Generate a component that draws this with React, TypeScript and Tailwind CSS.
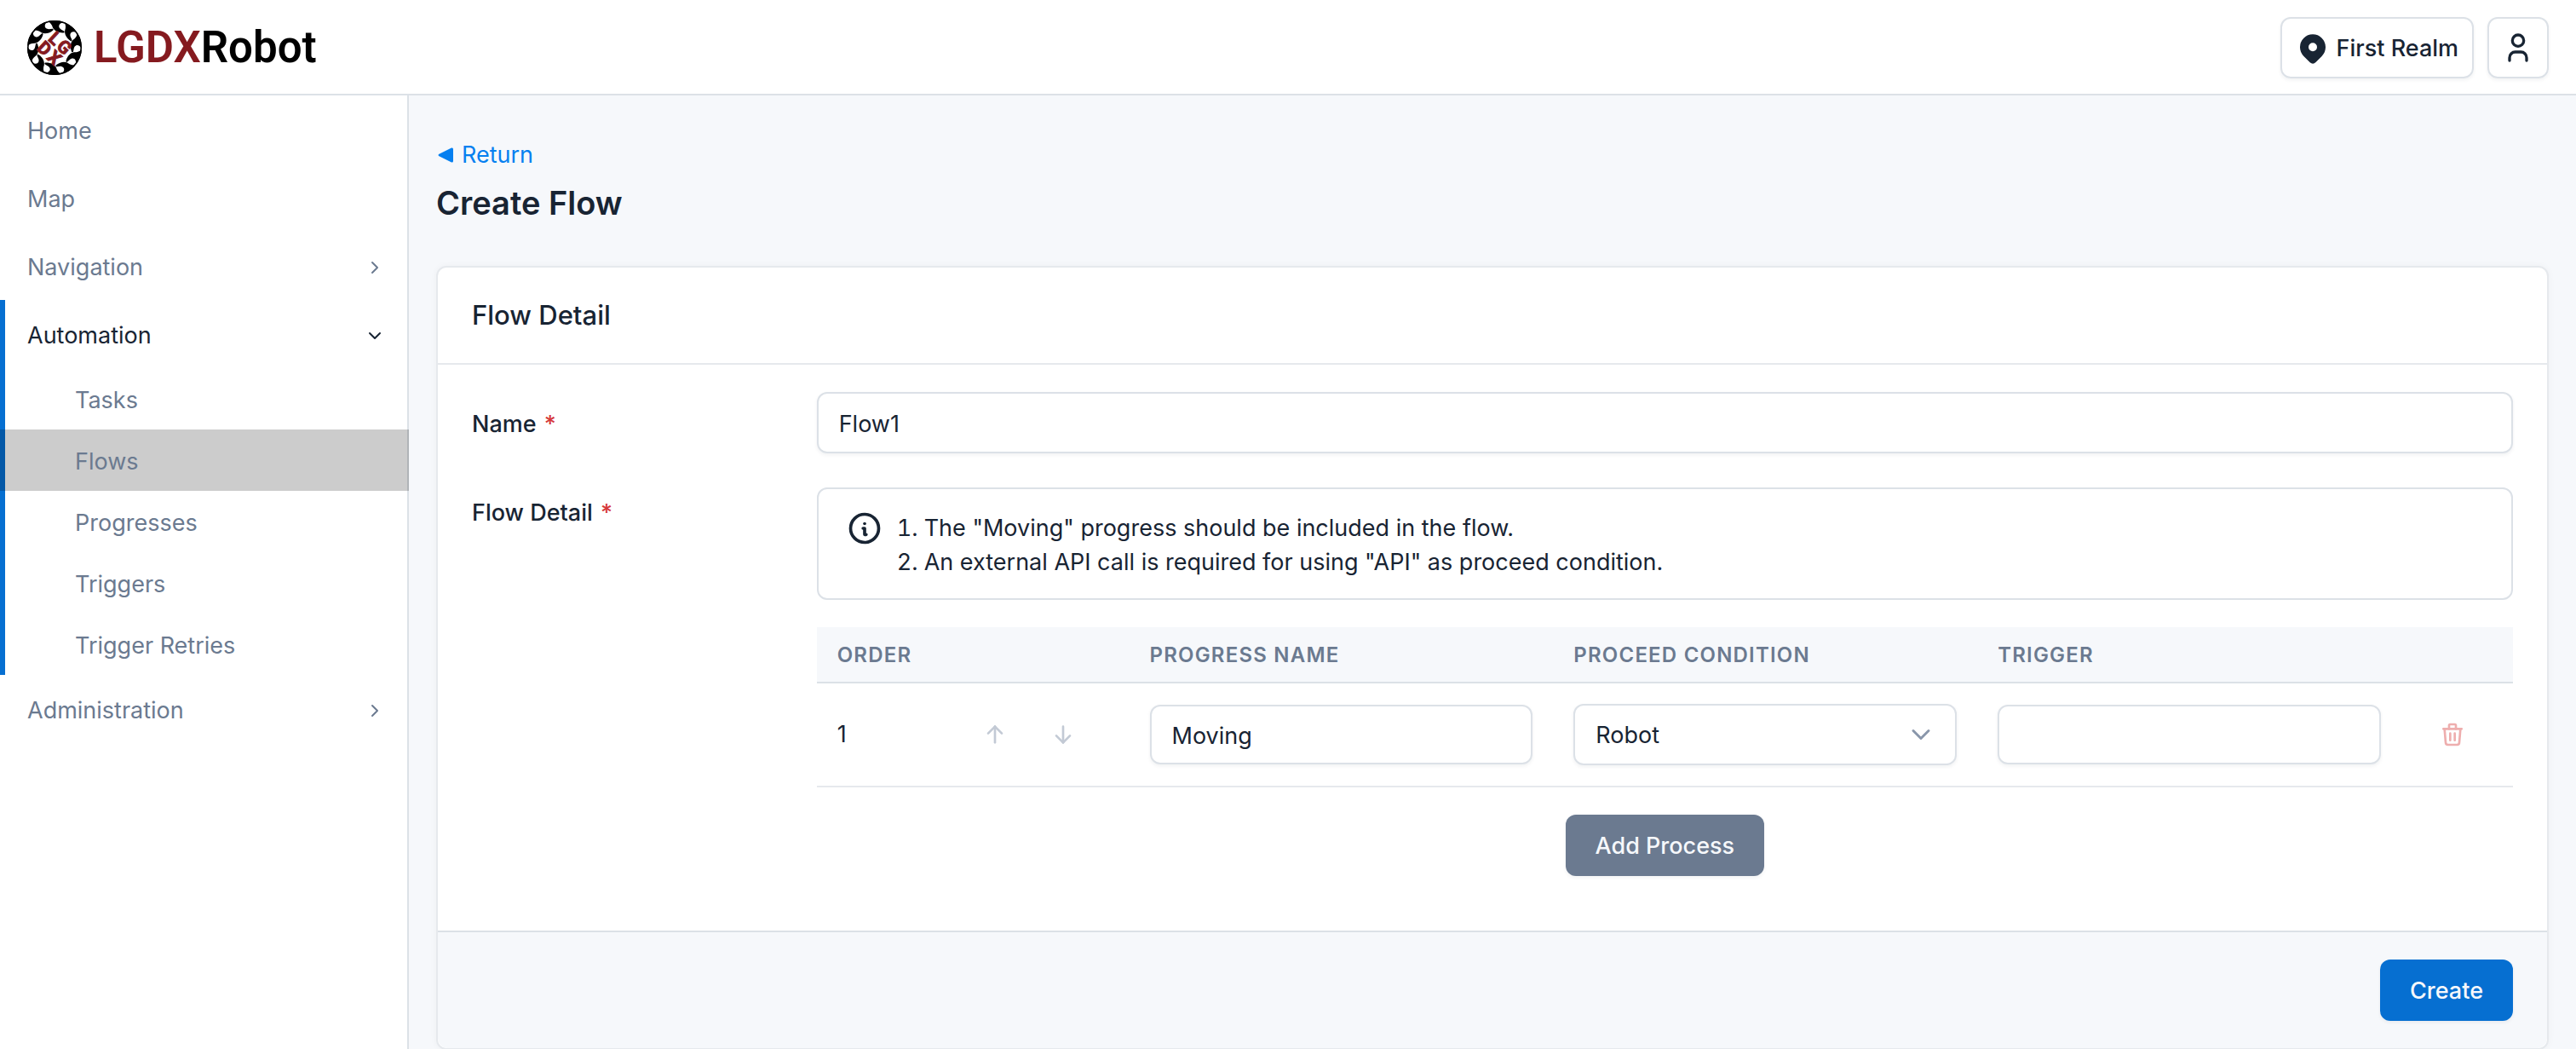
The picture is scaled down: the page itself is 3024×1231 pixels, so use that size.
import { useState } from "react";
import { TbArrowDown, TbArrowUp, TbChevronDown, TbChevronRight, TbInfoCircle, TbMapPinFilled, TbTrash, TbUser } from "react-icons/tb";

const subItems = ["Tasks", "Flows", "Progresses", "Triggers", "Trigger Retries"];
const conditions = ["Robot", "API"];

const control =
  "w-full rounded-xl border-2 border-[#dce1e7] bg-white px-6 pt-0.5 shadow-[0_2px_4px_rgba(24,36,51,0.06)] outline-none focus:border-[#066fd1]";

function Logo() {
  const blades = Array.from({ length: 10 }, (_, i) => i * 36);
  return (
    <svg viewBox="0 0 64 64" className="size-16" aria-hidden="true">
      <circle cx="32" cy="32" r="31.2" fill="#fff" stroke="#000" strokeWidth="1.6" />
      {blades.map((angle) => (
        <path
          key={angle}
          d="M24 1 A32 32 0 0 1 43 2 C38 3 36 6 38 9 C39.5 11 42 11.5 43.5 12.8 C44 14 43 14.6 42 14.4 C37 14.6 32 12.5 30 8.5 C29 5 27 2.5 24 1 Z"
          fill="#000"
          transform={`rotate(${angle} 32 32)`}
        />
      ))}
      <g
        transform="rotate(43 32 32)"
        fill="#851a1f"
        stroke="#851a1f"
        strokeWidth="1"
        fontFamily="Roboto, sans-serif"
        fontWeight="700"
        fontSize="21"
        textAnchor="middle"
      >
        <text x="25" y="31">L</text>
        <text x="40" y="31">G</text>
        <text x="24" y="48">D</text>
        <text x="40" y="48">X</text>
      </g>
    </svg>
  );
}

function Header() {
  return (
    <header className="flex items-center justify-between border-b-2 border-[#dce1e7] bg-white px-8 pt-5 pb-[18px]">
      <a href="#home" className="flex items-center gap-3.5">
        <Logo />
        <span className="font-[Roboto,sans-serif] text-[51px] font-semibold text-black">
          <span className="text-[#851a1f]">LGDX</span>Robot
        </span>
      </a>
      <div className="flex gap-4">
        <button type="button" className="flex h-18 items-center gap-2 rounded-xl border-2 border-[#dce1e7] px-4 pt-0.5 font-medium shadow-[0_2px_4px_rgba(24,36,51,0.06)]">
          <TbMapPinFilled className="size-10" />
          First Realm
        </button>
        <button type="button" aria-label="Account" className="flex size-18 items-center justify-center rounded-xl border-2 border-[#dce1e7] shadow-[0_2px_4px_rgba(24,36,51,0.06)]">
          <TbUser className="size-10" />
        </button>
      </div>
    </header>
  );
}

function Sidebar() {
  return (
    <nav className="w-120 shrink-0 border-r-2 border-[#dce1e7] bg-white text-[#6b7a90]">
      <a href="#home" className="flex h-20 items-center px-8 pt-1">Home</a>
      <a href="#map" className="flex h-20 items-center px-8 pt-1">Map</a>
      <a href="#navigation" className="flex h-20 items-center justify-between pt-1 pr-6.5 pl-8">
        Navigation <TbChevronRight className="size-6" />
      </a>
      <div className="relative">
        <span className="absolute inset-y-0 left-0 w-1.5 bg-[#066fd1]" />
        <a href="#automation" className="flex h-20 items-center justify-between pt-1 pr-6.5 pl-8 text-[#182433]">
          Automation <TbChevronDown className="size-6" />
        </a>
        {subItems.map((item) => (
          <a
            key={item}
            href={`#${item}`}
            className={item === "Flows" ? "relative -mr-0.5 flex h-18 items-center bg-black/20 pt-1 pl-22" : "flex h-18 items-center pt-1 pl-22"}
          >
            {item}
          </a>
        ))}
      </div>
      <a href="#administration" className="flex h-20 items-center justify-between pt-1 pr-6.5 pl-8">
        Administration <TbChevronRight className="size-6" />
      </a>
    </nav>
  );
}

function ProcessTable() {
  const [progress, setProgress] = useState("Moving");
  const [condition, setCondition] = useState("Robot");
  const [trigger, setTrigger] = useState("");

  return (
    <table className="w-full table-fixed border-collapse">
      <thead>
        <tr className="h-[65px] border-b-2 border-[#dce1e7] bg-[#f6f8fb] text-left text-2xl tracking-wider text-[#6b7a90] uppercase">
          <th scope="col" className="px-6 pt-0.5 font-semibold">Order</th>
          <th scope="col" className="w-1/4 px-6 pt-0.5 font-semibold">Progress Name</th>
          <th scope="col" className="w-1/4 px-6 pt-0.5 font-semibold">Proceed Condition</th>
          <th scope="col" className="w-1/4 px-6 pt-0.5 font-semibold">Trigger</th>
          <th scope="col" className="w-[131px]" aria-label="Actions" />
        </tr>
      </thead>
      <tbody>
        <tr className="h-[122px] border-b-2 border-[#e6e9ed]">
          <td className="px-6">
            <div className="flex items-center justify-between">
              1
              <div className="flex gap-12 pr-9.5 text-[#c3cad5]">
                <button type="button" disabled aria-label="Move up"><TbArrowUp className="size-8" /></button>
                <button type="button" disabled aria-label="Move down"><TbArrowDown className="size-8" /></button>
              </div>
            </div>
          </td>
          <td className="px-6">
            <input aria-label="Progress name" className={`${control} h-[70px]`} value={progress} onChange={(e) => setProgress(e.target.value)} />
          </td>
          <td className="px-6">
            <div className="grid items-center">
              <select
                aria-label="Proceed condition"
                className={`${control} col-start-1 row-start-1 h-18 appearance-none`}
                value={condition}
                onChange={(e) => setCondition(e.target.value)}
              >
                {conditions.map((name) => (
                  <option key={name}>{name}</option>
                ))}
              </select>
              <TbChevronDown className="pointer-events-none col-start-1 row-start-1 mr-6 size-9 justify-self-end text-[#8a97ab]" />
            </div>
          </td>
          <td className="px-6">
            <input aria-label="Trigger" className={`${control} h-[70px]`} value={trigger} onChange={(e) => setTrigger(e.target.value)} />
          </td>
          <td className="pl-6">
            <button type="button" disabled aria-label="Delete" className="flex size-18 items-center justify-center text-[#eeaeae]">
              <TbTrash className="size-8" />
            </button>
          </td>
        </tr>
      </tbody>
    </table>
  );
}

export default function App() {
  const [name, setName] = useState("Flow1");

  return (
    <div className="flex h-screen flex-col overflow-hidden bg-[#f6f8fb] font-[Inter,sans-serif] text-[27px] leading-10 text-[#182433]">
      <Header />
      <div className="flex min-h-0 flex-1">
        <Sidebar />
        <main className="min-w-0 flex-1 overflow-hidden px-8 pt-12">
          <a href="#flows" className="flex items-center gap-2.5 pt-0.5 text-[#0680f0]">
            <svg viewBox="0 0 18 18" className="ml-0.5 size-[18px]" fill="currentColor" aria-hidden="true">
              <path d="M1 8 L16 0.5 Q18 0 18 2 V16 Q18 18 16 17.5 L1 10 Q0 9 1 8 Z" />
            </svg>
            Return
          </a>
          <h1 className="mt-2 text-[38px] leading-14 font-semibold">Create Flow</h1>

          <form className="mt-11.5 rounded-xl border-2 border-[#e6e9ed] bg-white shadow-[0_0_8px_rgba(24,36,51,0.04)]" onSubmit={(e) => e.preventDefault()}>
            <h2 className="border-b-2 border-[#e6e9ed] px-10 py-9 text-[31px] leading-10 font-medium">Flow Detail</h2>
            <div className="p-10 pt-8 pb-16">
              <div className="-mx-4 flex">
                <label htmlFor="flow-name" className="w-1/6 px-4 pt-4.5 font-medium">
                  Name <span className="ml-0.5 text-[#d63939]">*</span>
                </label>
                <div className="w-5/6 px-4">
                  <input id="flow-name" required className={`${control} h-18`} value={name} onChange={(e) => setName(e.target.value)} />
                </div>
              </div>
              <div className="-mx-4 mt-10 flex">
                <div className="w-1/6 px-4 pt-2.5 font-medium">
                  Flow Detail <span className="ml-0.5 text-[#d63939]">*</span>
                </div>
                <div className="w-5/6 px-4">
                  <div className="flex gap-4 rounded-xl border-2 border-[#dce1e7] px-8 py-6">
                    <TbInfoCircle className="size-11 shrink-0" />
                    <ol className="-mb-0.5 list-inside list-decimal pt-0.5">
                      <li>The "Moving" progress should be included in the flow.</li>
                      <li>An external API call is required for using "API" as proceed condition.</li>
                    </ol>
                  </div>
                  <div className="mt-8">
                    <ProcessTable />
                  </div>
                  <button type="button" className="mx-auto mt-8 block h-18 rounded-xl bg-[#6b7a90] px-[35px] pt-0.5 font-medium text-[#f6f8fb] shadow-[0_2px_4px_rgba(24,36,51,0.06)]">
                    Add Process
                  </button>
                </div>
              </div>
            </div>
            <div className="flex justify-end rounded-b-xl border-t-2 border-[#dce1e7] bg-[#f6f8fb] px-10 py-8">
              <button type="submit" className="h-18 rounded-xl bg-[#066fd1] px-[35px] pt-0.5 font-medium text-[#f6f8fb] shadow-[0_2px_4px_rgba(24,36,51,0.06)]">
                Create
              </button>
            </div>
          </form>
        </main>
      </div>
    </div>
  );
}
